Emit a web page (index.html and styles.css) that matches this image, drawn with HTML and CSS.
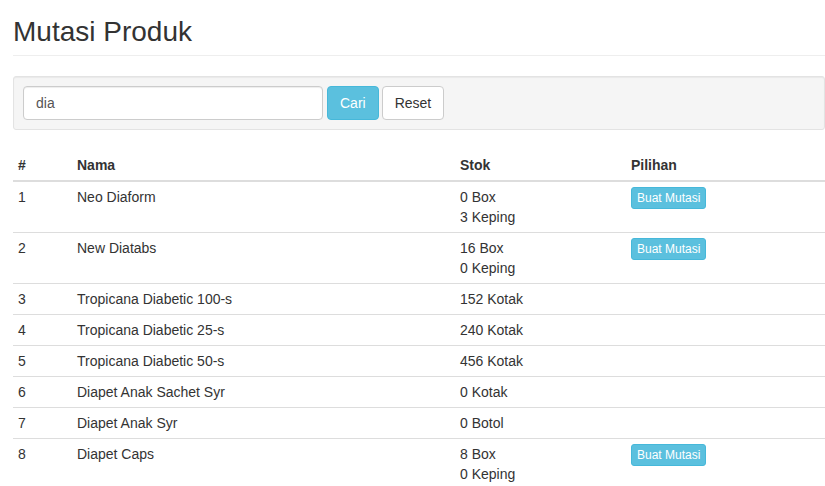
FILE: index.html
```html
<!DOCTYPE html>
<html>
<head>
<meta charset="utf-8">
<link rel="stylesheet" href="styles.css">
</head>
<body>
<div class="container">
  <div class="page-header">
    <h1>Mutasi Produk</h1>
  </div>
  <form class="well">
    <input class="form-control" type="text" value="dia">
    <button class="btn btn-info" type="button">Cari</button>
    <button class="btn btn-default btn-reset" type="button">Reset</button>
  </form>
  <table class="table">
    <colgroup>
      <col class="c-no"><col class="c-nama"><col class="c-stok"><col class="c-pilih">
    </colgroup>
    <thead>
      <tr><th>#</th><th>Nama</th><th>Stok</th><th>Pilihan</th></tr>
    </thead>
    <tbody>
      <tr><td>1</td><td>Neo Diaform</td><td>0 Box<br>3 Keping</td><td><button class="btn btn-info btn-xs" type="button">Buat Mutasi</button></td></tr>
      <tr><td>2</td><td>New Diatabs</td><td>16 Box<br>0 Keping</td><td><button class="btn btn-info btn-xs" type="button">Buat Mutasi</button></td></tr>
      <tr><td>3</td><td>Tropicana Diabetic 100-s</td><td>152 Kotak</td><td></td></tr>
      <tr><td>4</td><td>Tropicana Diabetic 25-s</td><td>240 Kotak</td><td></td></tr>
      <tr><td>5</td><td>Tropicana Diabetic 50-s</td><td>456 Kotak</td><td></td></tr>
      <tr><td>6</td><td>Diapet Anak Sachet Syr</td><td>0 Kotak</td><td></td></tr>
      <tr><td>7</td><td>Diapet Anak Syr</td><td>0 Botol</td><td></td></tr>
      <tr><td>8</td><td>Diapet Caps</td><td>8 Box<br>0 Keping</td><td><button class="btn btn-info btn-xs" type="button">Buat Mutasi</button></td></tr>
    </tbody>
  </table>
</div>
</body>
</html>
```
FILE: styles.css
```css
* { box-sizing: border-box; }
html, body { margin: 0; padding: 0; background: #fff; }
body {
  font-family: "Liberation Sans", Arial, sans-serif;
  font-size: 14px;
  line-height: 20px;
  color: #333;
}
.container {
  margin-left: 13px;
  width: 812px;
  padding-top: 16px;
}
.page-header {
  margin: 0 0 20px;
  padding-bottom: 8px;
  border-bottom: 1px solid #eee;
}
.page-header h1 {
  margin: 0;
  font-size: 28px;
  line-height: 31px;
  font-weight: 500;
  color: #333;
}
.well {
  display: flex;
  align-items: center;
  gap: 4px;
  margin: 0 0 20px;
  padding: 9px;
  background: #f5f5f5;
  border: 1px solid #e3e3e3;
  border-radius: 3px;
  box-shadow: inset 0 1px 1px rgba(0,0,0,.05);
}
.form-control {
  width: 300px;
  height: 34px;
  padding: 6px 12px;
  font: inherit;
  font-size: 14px;
  line-height: 20px;
  color: #555;
  background: #fff;
  border: 1px solid #ccc;
  border-radius: 4px;
  box-shadow: inset 0 1px 1px rgba(0,0,0,.075);
  outline: none;
}
.btn {
  display: inline-block;
  padding: 6px 12px;
  font-family: inherit;
  font-size: 14px;
  line-height: 20px;
  border: 1px solid transparent;
  border-radius: 4px;
  cursor: pointer;
  white-space: nowrap;
}
.btn-reset { margin-left: -1px; }
.btn-info {
  color: #fff;
  background: #5bc0de;
  border-color: #46b8da;
}
.btn-default {
  color: #333;
  background: #fff;
  border-color: #ccc;
}
.btn-xs {
  padding: 1px 5px;
  font-size: 12px;
  line-height: 18px;
  border-radius: 3px;
}
.table {
  width: 100%;
  border-collapse: collapse;
  border-spacing: 0;
  margin-bottom: 20px;
}
.c-no { width: 59px; }
.c-nama { width: 383px; }
.c-stok { width: 171px; }
.c-pilih { width: 199px; }
.table th, .table td {
  padding: 5px;
  text-align: left;
  vertical-align: top;
  line-height: 20px;
}
.table thead th {
  font-weight: bold;
  vertical-align: bottom;
  border-bottom: 2px solid #ddd;
}
.table tbody td {
  border-top: 1px solid #ddd;
}
```
